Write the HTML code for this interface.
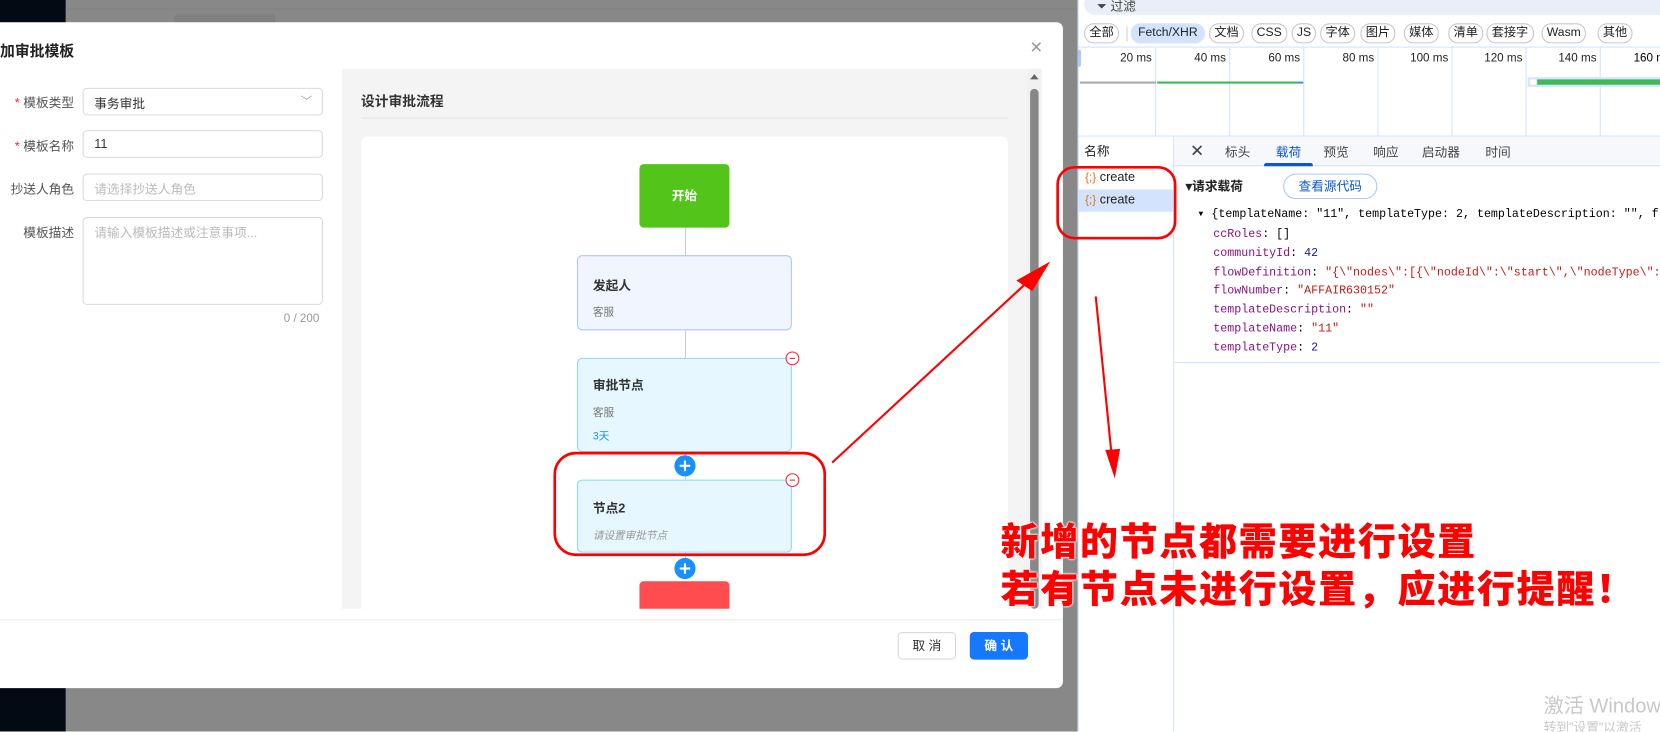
<!DOCTYPE html>
<html><head><meta charset="utf-8">
<style>
*{box-sizing:border-box;margin:0;padding:0}
html,body{width:1660px;height:732px;overflow:hidden;background:#fff;font-family:"Liberation Sans","Noto Sans CJK SC",sans-serif}
#w{position:absolute;left:0;top:0;width:1568px;height:691px;transform:scale(1.0587);transform-origin:0 0;overflow:hidden}
.a{position:absolute}
.lbl{position:absolute;font-size:12px;color:#555;text-align:right;width:70px;left:0}
.lbl b{color:#f5222d;font-weight:normal}
.inp{position:absolute;left:78px;width:227px;height:26px;border:1px solid #d9d9d9;border-radius:4px;font-size:12px;padding:5px 10px;color:#333}
.ph{color:#bbb}
.node{position:absolute;left:545px;width:203px;border-radius:5px;padding:0 14px}
.t{font-size:12px;font-weight:bold;color:#333}
.s{font-size:10px;color:#777}
.minus{position:absolute;width:13px;height:13px;border:1px solid #f5222d;border-radius:50%;background:#fff}
.minus:after{content:"";position:absolute;left:3px;top:5px;width:5px;height:1px;background:#f5222d}
.plus{position:absolute;width:20px;height:20px;border-radius:50%;background:#1890ff}
.plus:before{content:"";position:absolute;left:5px;top:9px;width:10px;height:1.5px;background:#fff}
.plus:after{content:"";position:absolute;left:9.3px;top:5px;width:1.5px;height:10px;background:#fff}
.chip{position:absolute;top:22px;height:19px;border:1px solid #c4c7cc;border-radius:9px;font-size:11.5px;line-height:17px;padding:0 4px;color:#222;white-space:nowrap}
.ms{position:absolute;top:49px;font-size:11px;color:#222;text-align:right;width:60px;white-space:nowrap}
.vl{position:absolute;top:45px;width:1px;height:83px;background:#d3e3fd}
.mono{font-family:"Liberation Mono","Noto Sans CJK SC",monospace;font-size:11px;position:absolute;left:1146px;white-space:nowrap}
.k{color:#881280}.v{color:#1a1aa6}.st{color:#c41a16}
.ann{position:absolute;left:945px;font-size:36px;font-weight:900;color:#f00;white-space:nowrap;text-shadow:0 0 2px #fff,0 0 2px #fff,0 0 2px #fff;letter-spacing:1.5px;line-height:40px}
</style></head><body><div id="w">
<div class="a" style="left:0;top:0;width:1018px;height:691px;background:#888"></div>
<div class="a" style="left:0;top:0;width:62px;height:691px;background:#020a14"></div>
<div class="a" style="left:165px;top:13px;width:95px;height:10px;background:#7f7f7f;border-radius:3px"></div>
<div class="a" style="left:62px;top:8px;width:956px;height:1px;background:#808080"></div>
<div class="a" style="left:-6px;top:21px;width:1010px;height:629px;background:#fff;border-radius:6px"></div>
<div class="a" style="left:0;top:38px;font-size:14px;font-weight:bold;color:#222">加审批模板</div>
<div class="a" style="left:973px;top:34px;font-size:20px;color:#999;font-weight:300">×</div>
<div class="lbl" style="top:88px"><b>* </b>模板类型</div>
<div class="inp" style="top:83px">事务审批<span style="position:absolute;right:9px;top:3px;color:#aaa;font-size:11px">﹀</span></div>
<div class="lbl" style="top:129px"><b>* </b>模板名称</div>
<div class="inp" style="top:123px">11</div>
<div class="lbl" style="top:170px">抄送人角色</div>
<div class="inp" style="top:164px"><span class="ph">请选择抄送人角色</span></div>
<div class="lbl" style="top:211px">模板描述</div>
<div class="inp" style="top:205px;height:83px"><span class="ph">请输入模板描述或注意事项...</span></div>
<div class="a" style="left:268px;top:295px;font-size:11px;color:#999">0 / 200</div>
<div class="a" style="left:323px;top:65px;width:647px;height:510px;background:#f4f4f4"></div>
<div class="a" style="left:341px;top:85px;font-size:13px;font-weight:bold;color:#333">设计审批流程</div>
<div class="a" style="left:341px;top:111px;width:611px;height:1px;background:#e3e3e3"></div>
<div class="a" style="left:341px;top:129px;width:611px;height:446px;background:#fff;border-radius:6px 6px 0 0"></div>
<div class="a" style="left:970px;top:65px;width:14px;height:510px;background:#f1f1f1"></div>
<div class="a" style="left:973px;top:70px;width:0;height:0;border-left:4px solid transparent;border-right:4px solid transparent;border-bottom:5px solid #666"></div>
<div class="a" style="left:973px;top:84px;width:8px;height:491px;background:#878787;border-radius:4px"></div>
<div class="a" style="left:647px;top:215px;width:1px;height:330px;background:#ccc"></div>
<div class="a" style="left:604px;top:155px;width:85px;height:60px;background:#52c41a;border-radius:4px;color:#fff;font-weight:bold;font-size:12px;text-align:center;line-height:60px">开始</div>
<div class="node" style="top:241px;height:71px;background:#f0f5ff;border:1px solid #adc6ff"><div class="t" style="margin-top:19px">发起人</div><div class="s" style="margin-top:8px">客服</div></div>
<div class="node" style="top:338px;height:89px;background:#e6f7ff;border:1px solid #91d5ff"><div class="t" style="margin-top:16px">审批节点</div><div class="s" style="margin-top:9px">客服</div><div class="s" style="margin-top:7px;color:#1890ff">3天</div></div>
<div class="minus" style="left:742px;top:332px"></div>
<div class="plus" style="left:637px;top:430px"></div>
<div class="node" style="top:453px;height:69px;background:#e6f7ff;border:1px solid #91d5ff"><div class="t" style="margin-top:17px;font-weight:bold">节点2</div><div class="s" style="margin-top:9px;font-style:italic;color:#999">请设置审批节点</div></div>
<div class="minus" style="left:742px;top:447px"></div>
<div class="plus" style="left:637px;top:527px"></div>
<div class="a" style="left:604px;top:549px;width:85px;height:26px;background:#ff4d4f;border-radius:4px 4px 0 0"></div>
<div class="a" style="left:0;top:585px;width:1004px;height:1px;background:#e8e8e8"></div>
<div class="a" style="left:848px;top:597px;width:55px;height:26px;border:1px solid #d9d9d9;border-radius:4px;font-size:12px;text-align:center;line-height:24px;color:#333">取 消</div>
<div class="a" style="left:916px;top:597px;width:55px;height:26px;background:#1677ff;border-radius:4px;font-size:12px;text-align:center;line-height:26px;color:#fff;font-weight:bold">确 认</div>
<div class="a" style="left:1018px;top:0;width:550px;height:691px;background:#fff;border-left:1px solid #d3e3fd"></div>
<div class="a" style="left:1024px;top:-6px;width:560px;height:20px;background:#e9eef8;border-radius:10px"></div>
<div class="a" style="left:1036px;top:-3px;font-size:12px;color:#444">⏷ 过滤</div>
<div class="chip" style="left:1024px">全部</div>
<div class="a" style="left:1064px;top:25px;width:1px;height:14px;background:#ccc"></div>
<div class="chip" style="left:1068px;background:#d3e3fd;border-color:#d3e3fd;padding:0 6px">Fetch/XHR</div>
<div class="chip" style="left:1142px">文档</div>
<div class="chip" style="left:1182px">CSS</div>
<div class="chip" style="left:1220px">JS</div>
<div class="chip" style="left:1247px">字体</div>
<div class="chip" style="left:1285px">图片</div>
<div class="chip" style="left:1326px">媒体</div>
<div class="chip" style="left:1368px">清单</div>
<div class="chip" style="left:1404px">套接字</div>
<div class="chip" style="left:1456px">Wasm</div>
<div class="chip" style="left:1509px">其他</div>
<div class="a" style="left:1018px;top:44px;width:550px;height:1px;background:#d3e3fd"></div>
<div class="a" style="left:1018px;top:47px;width:3px;height:16px;background:#a8c7fa;border-radius:2px"></div>
<div class="vl" style="left:1091px"></div><div class="vl" style="left:1161px"></div><div class="vl" style="left:1231px"></div><div class="vl" style="left:1301px"></div><div class="vl" style="left:1371px"></div><div class="vl" style="left:1441px"></div><div class="vl" style="left:1511px"></div>
<div class="ms" style="left:1028px">20 ms</div><div class="ms" style="left:1098px">40 ms</div><div class="ms" style="left:1168px">60 ms</div><div class="ms" style="left:1238px">80 ms</div><div class="ms" style="left:1308px">100 ms</div><div class="ms" style="left:1378px">120 ms</div><div class="ms" style="left:1448px">140 ms</div><div class="a" style="left:1543px;top:49px;font-size:11px;white-space:nowrap">160 ms</div>
<div class="a" style="left:1020px;top:77px;width:72px;height:2px;background:#aaa"></div>
<div class="a" style="left:1093px;top:77px;width:133px;height:2px;background:#3cba54"></div>
<div class="a" style="left:1226px;top:77px;width:5px;height:2px;background:#4f8df5"></div>
<div class="a" style="left:1443px;top:73px;width:125px;height:9px;background:#d3e3fd"></div>
<div class="a" style="left:1445px;top:75px;width:6px;height:5px;background:#fff"></div>
<div class="a" style="left:1452px;top:75px;width:116px;height:5px;background:#3cba54"></div>
<div class="a" style="left:1018px;top:128px;width:550px;height:1px;background:#d3e3fd"></div>
<div class="a" style="left:1108px;top:128px;width:1px;height:563px;background:#d3e3fd"></div>
<div class="a" style="left:1109px;top:129px;width:459px;height:28px;background:#f6f8fc;border-bottom:1px solid #d3e3fd"></div>
<div class="a" style="left:1024px;top:134px;font-size:12px;color:#222">名称</div>
<div class="a" style="left:1025px;top:160px;font-size:12px;color:#222"><span style="color:#e8710a;font-size:11px">{;}</span> create</div>
<div class="a" style="left:1018px;top:179px;width:90px;height:21px;background:#d3e3fd"></div>
<div class="a" style="left:1025px;top:181px;font-size:12px;color:#222"><span style="color:#e8710a;font-size:11px">{;}</span> create</div>
<div class="a" style="left:1124px;top:133px;font-size:16px;color:#444">✕</div>
<div class="a" style="left:1157px;top:135px;font-size:12px;color:#444">标头</div>
<div class="a" style="left:1205px;top:135px;font-size:12px;color:#0b57d0">载荷</div>
<div class="a" style="left:1194px;top:154px;width:46px;height:3px;background:#0b57d0;border-radius:2px 2px 0 0"></div>
<div class="a" style="left:1250px;top:135px;font-size:12px;color:#444">预览</div>
<div class="a" style="left:1297px;top:135px;font-size:12px;color:#444">响应</div>
<div class="a" style="left:1343px;top:135px;font-size:12px;color:#444">启动器</div>
<div class="a" style="left:1403px;top:135px;font-size:12px;color:#444">时间</div>
<div class="a" style="left:1120px;top:167px;font-size:12px;font-weight:bold;color:#222">▾请求载荷</div>
<div class="a" style="left:1212px;top:164px;width:89px;height:24px;border:1px solid #a8c7fa;border-radius:12px;font-size:12px;color:#0b57d0;text-align:center;line-height:22px">查看源代码</div>
<div class="mono" style="left:1131px;top:195px">▾ {templateName: "11", templateType: 2, templateDescription: "", fl</div>
<div class="mono" style="top:216px"><span class="k">ccRoles</span>: []</div>
<div class="mono" style="top:234px"><span class="k">communityId</span>: <span class="v">42</span></div>
<div class="mono" style="top:252px"><span class="k">flowDefinition</span>: <span class="st">"{\"nodes\":[{\"nodeId\":\"start\",\"nodeType\":</span></div>
<div class="mono" style="top:269px"><span class="k">flowNumber</span>: <span class="st">"AFFAIR630152"</span></div>
<div class="mono" style="top:287px"><span class="k">templateDescription</span>: <span class="st">""</span></div>
<div class="mono" style="top:305px"><span class="k">templateName</span>: <span class="st">"11"</span></div>
<div class="mono" style="top:323px"><span class="k">templateType</span>: <span class="v">2</span></div>
<div class="a" style="left:1109px;top:342px;width:459px;height:1px;background:#d3e3fd"></div>
<div class="a" style="left:1458px;top:652px;font-size:19px;color:#c8c8c8;white-space:nowrap">激活 Windows</div>
<div class="a" style="left:1458px;top:678px;font-size:12px;color:#c8c8c8;white-space:nowrap">转到"设置"以激活</div>
<svg class="a" style="left:0;top:0" width="1568" height="691">
<rect x="524" y="428" width="255" height="96" rx="20" fill="none" stroke="#f00" stroke-width="2.5"/>
<rect x="999" y="158" width="111" height="67" rx="16" fill="none" stroke="#f00" stroke-width="2.5"/>
<line x1="786" y1="437" x2="972" y2="265" stroke="#f00" stroke-width="2"/>
<polygon points="992,247 960,265 975,275" fill="#f00"/>
<line x1="1035" y1="280" x2="1050" y2="430" stroke="#f00" stroke-width="2"/>
<polygon points="1053,452 1044,425 1058,424" fill="#f00"/>
</svg>
<div class="ann" style="top:492px">新增的节点都需要进行设置</div>
<div class="ann" style="top:537px">若有节点未进行设置，应进行提醒！</div>
</div></body></html>
